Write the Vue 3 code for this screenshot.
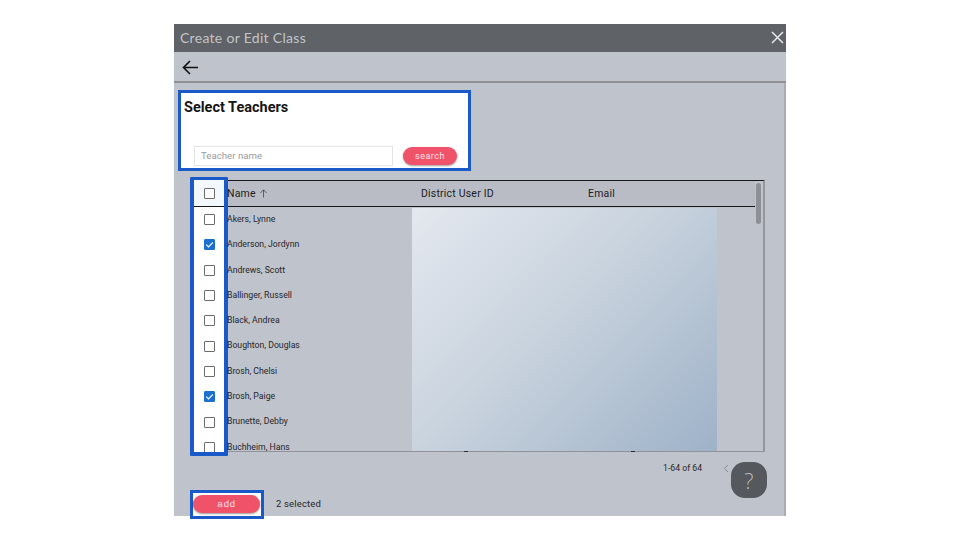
<script setup>
const rows = [
  { name: 'Akers, Lynne', on: false },
  { name: 'Anderson, Jordynn', on: true },
  { name: 'Andrews, Scott', on: false },
  { name: 'Ballinger, Russell', on: false },
  { name: 'Black, Andrea', on: false },
  { name: 'Boughton, Douglas', on: false },
  { name: 'Brosh, Chelsi', on: false },
  { name: 'Brosh, Paige', on: true },
  { name: 'Brunette, Debby', on: false },
  { name: 'Buchheim, Hans', on: false },
]
</script>

<template>
  <div class="page">
    <section class="modal">
      <header class="titlebar">
        <span class="title">Create or Edit Class</span>
        <svg class="close" width="13" height="13" viewBox="0 0 13 13"><path d="M1 1l11 11M12 1L1 12" stroke="#e8e9ea" stroke-width="1.5" fill="none"/></svg>
      </header>
      <div class="toolbar">
        <svg width="17" height="15" viewBox="0 0 17 15"><path d="M16 7.5H1.5M8 1L1.5 7.5 8 14" stroke="#111" stroke-width="1.6" fill="none"/></svg>
      </div>
      <div class="body">
        <div class="select-box">
          <h2>Select Teachers</h2>
          <div class="search-row">
            <div class="input">Teacher name</div>
            <button class="pill search">search</button>
          </div>
        </div>

        <div class="table">
          <div class="check-col">
            <div class="check-head"><span class="box"></span></div>
            <div v-for="r in rows" :key="r.name" class="check-cell">
              <span class="box" :class="{ on: r.on }">
                <svg v-if="r.on" width="9" height="9" viewBox="0 0 10 10"><path d="M1.5 5.2l2.4 2.4 4.8-5" stroke="#fff" stroke-width="1.3" fill="none"/></svg>
              </span>
            </div>
          </div>
          <div class="main-col">
            <div class="head">
              <span class="h-name">Name <svg width="9" height="9" viewBox="0 0 9 9"><path d="M4.5 8.5V1M1.3 4l3.2-3.2L7.7 4" stroke="#555" stroke-width="0.9" fill="none"/></svg></span>
              <span class="h-id">District User ID</span>
              <span class="h-email">Email</span>
            </div>
            <div class="rows-wrap">
              <div class="names">
                <div v-for="r in rows" :key="r.name" class="name">{{ r.name }}</div>
              </div>
              <div class="blur"></div>
            </div>
          </div>
          <div class="scroll"><div class="thumb"></div></div>
        </div>

        <div class="pager">
          <span>1-64 of 64</span>
          <svg width="6" height="9" viewBox="0 0 6 9"><path d="M5 1L1.3 4.5 5 8" stroke="#8d9097" stroke-width="1" fill="none"/></svg>
        </div>

        <div class="footer">
          <div class="add-box"><button class="pill add">add</button></div>
          <span class="count">2 selected</span>
        </div>

        <div class="help">?</div>
      </div>
    </section>
  </div>
</template>

<style>
html, body { background: #fff; }
</style>

<style scoped>
.page {
  width: 960px;
  height: 540px;
  padding: 24px 0 0 174px;
  box-sizing: border-box;
  background: #fff;
  font-family: Roboto, "Liberation Sans", sans-serif;
}
.modal {
  width: 612px;
  height: 492px;
  display: flex;
  flex-direction: column;
  background: #bfc3cc;
}
.titlebar {
  height: 28px;
  flex: none;
  box-sizing: border-box;
  background: #5f6266;
  display: flex;
  align-items: center;
  justify-content: space-between;
  padding: 0 2px 2px 6px;
}
.title {
  font-family: Lato, sans-serif;
  font-size: 14px;
  letter-spacing: 0.3px;
  color: #c3c5c9;
}
.toolbar {
  flex: none;
  display: flex;
  align-items: center;
  padding: 1px 0 0 8px;
  box-sizing: border-box;
  border-bottom: 2px solid #8e9096;
  height: 31px;
}
.body {
  position: relative;
  flex: 1;
  min-height: 0;
  padding: 7px 0 0 4px;
  border-right: 2px solid #a9acb4;
}
.select-box {
  width: 293px;
  height: 81px;
  box-sizing: border-box;
  border: 3px solid #1a5ac8;
  background: #fff;
  padding: 6px 0 0 3px;
  display: flex;
  flex-direction: column;
}
h2 {
  margin: 0;
  font-size: 14.5px;
  font-weight: 700;
  line-height: 18px;
  color: #161616;
}
.search-row {
  margin: 29px 0 0 10px;
  display: flex;
  align-items: center;
  gap: 10px;
}
.input {
  width: 199px;
  height: 20px;
  box-sizing: border-box;
  border: 1px solid #e4e4e4;
  padding-left: 6px;
  font-size: 9.7px;
  line-height: 18px;
  color: #9b9b9b;
}
.pill {
  border: 0;
  padding: 0;
  color: #fde4e8;
  background: #f0526a;
  border-radius: 10px;
  box-shadow: 0 1px 2px rgba(0, 0, 0, 0.4);
}
.search {
  width: 54px;
  height: 18px;
  font-family: Roboto, sans-serif;
  font-size: 9px;
  letter-spacing: 0.5px;
}
.table {
  position: relative;
  margin: 9px 0 0 13px;
  width: 574px;
  height: 272px;
  box-sizing: border-box;
  border-top: 1px solid #17181c;
  border-right: 2px solid #94979e;
  border-bottom: 1px solid #8f9299;
  display: flex;
}
.table::before,
.table::after {
  content: "";
  position: absolute;
  top: 270px;
  width: 4px;
  height: 1px;
  background: #2a2c30;
}
.table::before { left: 273px; }
.table::after { left: 440px; }
.check-col {
  position: relative;
  z-index: 1;
  flex: none;
  width: 38px;
  height: 279px;
  margin: -4px 0 0 -1px;
  box-sizing: border-box;
  border: 4px solid #1a5ac8;
  border-top-width: 3px;
  border-radius: 1px;
  background: #fff;
  overflow: hidden;
}
.check-head {
  height: 26px;
  background: #f3f8fc;
  display: flex;
  align-items: center;
  justify-content: center;
  border-bottom: 1px solid #17181c;
}
.check-cell {
  height: 25.3px;
  display: flex;
  align-items: center;
  justify-content: center;
}
.box {
  width: 9px;
  height: 9px;
  border: 1px solid #6c6c6c;
  border-radius: 1px;
  display: flex;
  align-items: center;
  justify-content: center;
  background: #fff;
}
.box.on {
  background: #1b6fd0;
  border-color: #1b6fd0;
}
.main-col {
  flex: 1;
  min-width: 0;
  margin-left: -1px;
  overflow: hidden;
  display: flex;
  flex-direction: column;
}
.head {
  height: 26px;
  flex: none;
  box-sizing: border-box;
  background: #b9bcc5;
  border-bottom: 1px solid #17181c;
  display: flex;
  align-items: center;
  font-size: 10.5px;
  letter-spacing: 0.2px;
  color: #1d1d1f;
}
.h-name {
  position: relative;
  z-index: 2;
  width: 194px;
  display: flex;
  align-items: center;
  gap: 3px;
}
.h-id { width: 167px; }
.rows-wrap {
  flex: 1;
  min-height: 0;
  display: flex;
  overflow: hidden;
}
.names {
  position: relative;
  z-index: 2;
  flex: none;
  width: 185px;
}
.name {
  height: 25.3px;
  line-height: 25.3px;
  font-size: 8.7px;
  color: #26272b;
  white-space: nowrap;
}
.blur {
  flex: none;
  width: 305px;
  margin-top: 1px;
  height: 243px;
  background: linear-gradient(135deg, #e4e8ef 0%, #c9d3de 45%, #9eb2c8 100%);
}
.scroll {
  flex: none;
  width: 8px;
  padding: 2px 1px;
  box-sizing: border-box;
  background: #bfc3cc;
}
.thumb {
  width: 5px;
  height: 41px;
  border-radius: 3px;
  background: #8d9096;
}
.pager {
  margin: 10px 0 0 485px;
  height: 12px;
  display: flex;
  align-items: center;
  gap: 21px;
  font-size: 8.7px;
  color: #26272b;
}
.footer {
  margin: 16px 0 0 12px;
  display: flex;
  align-items: flex-start;
  gap: 12px;
}
.add-box {
  width: 74px;
  height: 29px;
  box-sizing: border-box;
  border: 3px solid #1a5ac8;
  background: #fff;
  padding: 2px 0 0 0;
  display: flex;
  justify-content: flex-start;
}
.add {
  width: 67px;
  height: 18px;
  font-family: "Liberation Mono", monospace;
  font-size: 9.5px;
  letter-spacing: 0.4px;
}
.count {
  margin-top: 8px;
  font-size: 9.5px;
  line-height: 12px;
  letter-spacing: 0.15px;
  color: #26272b;
}
.help {
  position: absolute;
  left: 557px;
  top: 379px;
  width: 36px;
  height: 36px;
  border-radius: 14px;
  background: #55585c;
  color: #b5b7ba;
  font-family: "Open Sans", sans-serif;
  font-size: 22px;
  font-weight: 300;
  line-height: 36px;
  text-align: center;
}
</style>
